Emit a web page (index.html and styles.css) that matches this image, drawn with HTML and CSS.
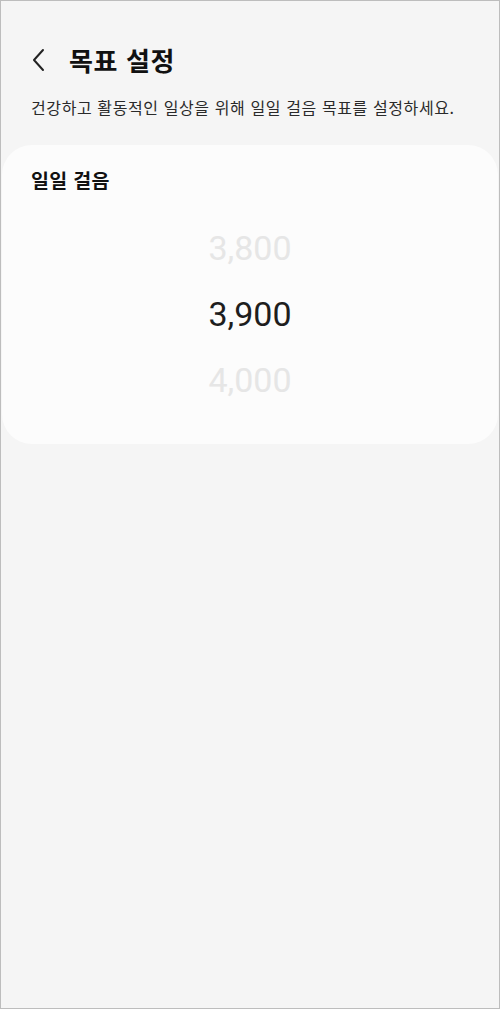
FILE: index.html
```html
<!DOCTYPE html>
<html lang="ko">
<head>
    <meta charset="UTF-8">
    <meta name="viewport" content="width=device-width, initial-scale=1.0">
    <title>목표 설정</title>
    <link rel="stylesheet" href="styles.css">
</head>
<body>
    <div class="screen">
        <header class="top-bar">
            <button class="back-btn" aria-label="뒤로">
                <svg width="16" height="24" viewBox="0 0 16 24">
                    <path d="M12 2 L3 12 L12 22" fill="none" stroke="#222" stroke-width="2" stroke-linecap="round" stroke-linejoin="round"/>
                </svg>
            </button>
            <h1 class="title">목표 설정</h1>
        </header>
        <p class="intro">건강하고 활동적인 일상을 위해 일일 걸음 목표를 설정하세요.</p>

        <section class="card">
            <h2 class="card-title">일일 걸음</h2>
            <div class="picker">
                <div class="picker-item faded">3,800</div>
                <div class="picker-item selected">3,900</div>
                <div class="picker-item faded">4,000</div>
            </div>
        </section>
    </div>
</body>
</html>
```

FILE: styles.css
```css
html, body {
    margin: 0;
    padding: 0;
}
body {
    font-family: "Noto Sans CJK KR", "Noto Sans", sans-serif;
    background-color: #f5f5f5;
    color: #222;
}
.screen {
    box-sizing: border-box;
    width: 500px;
    height: 1009px;
    border: 1px solid #bdbdbd;
    padding: 0 1px;
}
.top-bar {
    display: flex;
    align-items: center;
    height: 26px;
    margin-top: 46px;
    padding-left: 29px;
}
.back-btn {
    border: none;
    background: none;
    padding: 0;
    width: 16px;
    height: 24px;
    display: flex;
    align-items: center;
}
.title {
    margin: 0 0 0 22px;
    font-size: 26px;
    font-weight: 700;
    line-height: 26px;
    letter-spacing: 0.6px;
    color: #111;
}
.intro {
    margin: 22px 0 0 29px;
    font-size: 16px;
    line-height: 24px;
    letter-spacing: 0.6px;
    color: #2a2a2a;
}
.card {
    margin-top: 26px;
    height: 299px;
    background-color: #fcfcfc;
    border-radius: 30px;
}
.card-title {
    margin: 0;
    padding: 21px 0 0 29px;
    font-size: 19.5px;
    font-weight: 700;
    line-height: 28px;
    letter-spacing: 0.3px;
    color: #111;
}
.picker {
    display: flex;
    flex-direction: column;
    align-items: center;
    margin-top: 21px;
}
.picker-item {
    font-family: Roboto, "Noto Sans", sans-serif;
    font-size: 34px;
    line-height: 66px;
    height: 66px;
}
.faded {
    color: #e6e6e6;
}
.selected {
    color: #1e1e1e;
}
```
